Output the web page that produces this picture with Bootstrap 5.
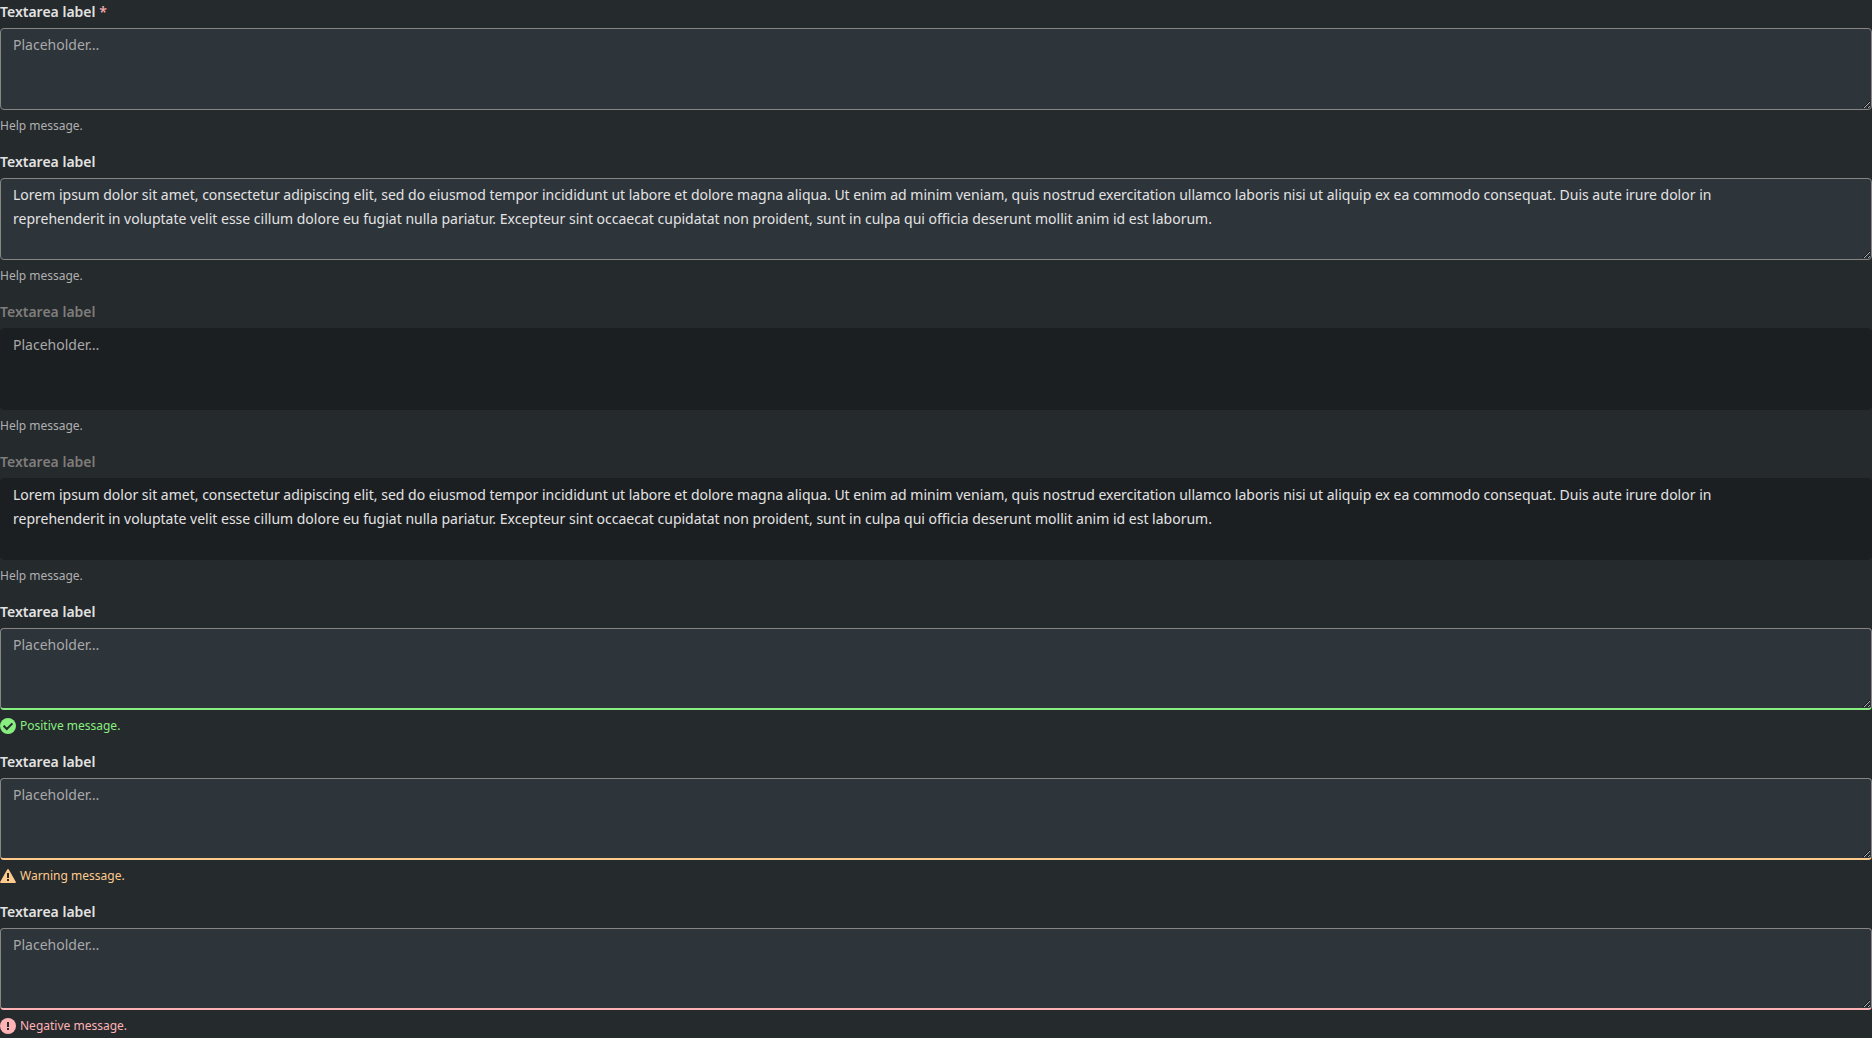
<!DOCTYPE html>
<html lang="en" data-bs-theme="dark">
<head>
<meta charset="utf-8">
<meta name="viewport" content="width=device-width, initial-scale=1">
<title>Textarea states</title>
<link href="https://cdn.jsdelivr.net/npm/bootstrap@5.3.0/dist/css/bootstrap.min.css" rel="stylesheet">
<style>
body { background: #252a2d; color: #e3e3e3; font-family: "Noto Sans", sans-serif; font-size: 14px; line-height: 24px; }
.field-list { row-gap: 12px; }
.field .form-label { font-size: 14px; line-height: 24px; font-weight: 600; color: #e3e3e3; }
.required-mark { color: #f7a8ab; }
.field .form-control { height: 82px; padding: 4px 12px; font-size: 14px; line-height: 24px; color: #e3e3e3; background-color: #2d343a; border: 1px solid #888684; border-radius: 4px; }
.field .form-control::placeholder { color: #a9a9a9; opacity: 1; }
.field .form-control:disabled { background-color: #1c1f22; border-color: #1c1f22; resize: none; }
.field-disabled .form-label { color: #7f7d7b; }
.field .form-text { font-size: 12px; line-height: 24px; color: #b0b0b0; }
.field-positive { --state: #88ee80; }
.field-warning { --state: #ffcb8c; }
.field-negative { --state: #ffb3b5; }
.field-state .form-control { border-bottom: 2px solid var(--state); }
.field-state .form-text { color: var(--state); }
</style>
<script src="https://cdn.jsdelivr.net/npm/bootstrap@5.3.0/dist/js/bootstrap.bundle.min.js"></script>
</head>
<body>
<form class="field-list d-grid">
  <div class="field">
    <label class="form-label d-block mb-1" for="required">Textarea label <span class="required-mark">*</span></label>
    <textarea class="form-control" id="required" placeholder="Placeholder…" aria-describedby="required-help" required></textarea>
    <div class="form-text mt-1" id="required-help">Help message.</div>
  </div>
  <div class="field">
    <label class="form-label d-block mb-1" for="filled">Textarea label</label>
    <textarea class="form-control" id="filled" aria-describedby="filled-help">Lorem ipsum dolor sit amet, consectetur adipiscing elit, sed do eiusmod tempor incididunt ut labore et dolore magna aliqua. Ut enim ad minim veniam, quis nostrud exercitation ullamco laboris nisi ut aliquip ex ea commodo consequat. Duis aute irure dolor in
reprehenderit in voluptate velit esse cillum dolore eu fugiat nulla pariatur. Excepteur sint occaecat cupidatat non proident, sunt in culpa qui officia deserunt mollit anim id est laborum.</textarea>
    <div class="form-text mt-1" id="filled-help">Help message.</div>
  </div>
  <div class="field field-disabled">
    <label class="form-label d-block mb-1" for="disabled">Textarea label</label>
    <textarea class="form-control" id="disabled" placeholder="Placeholder…" aria-describedby="disabled-help" disabled></textarea>
    <div class="form-text mt-1" id="disabled-help">Help message.</div>
  </div>
  <div class="field field-disabled">
    <label class="form-label d-block mb-1" for="disabled-filled">Textarea label</label>
    <textarea class="form-control" id="disabled-filled" aria-describedby="disabled-filled-help" disabled>Lorem ipsum dolor sit amet, consectetur adipiscing elit, sed do eiusmod tempor incididunt ut labore et dolore magna aliqua. Ut enim ad minim veniam, quis nostrud exercitation ullamco laboris nisi ut aliquip ex ea commodo consequat. Duis aute irure dolor in
reprehenderit in voluptate velit esse cillum dolore eu fugiat nulla pariatur. Excepteur sint occaecat cupidatat non proident, sunt in culpa qui officia deserunt mollit anim id est laborum.</textarea>
    <div class="form-text mt-1" id="disabled-filled-help">Help message.</div>
  </div>
  <div class="field field-state field-positive">
    <label class="form-label d-block mb-1" for="positive">Textarea label</label>
    <textarea class="form-control" id="positive" placeholder="Placeholder…" aria-describedby="positive-help"></textarea>
    <div class="form-text mt-1 d-flex align-items-center gap-1" id="positive-help">
      <svg width="16" height="16" viewBox="0 0 16 16" aria-hidden="true"><circle cx="8" cy="8" r="8" fill="currentColor"/><path d="M3.6 7.8 6.8 11l5.6-5.6" fill="none" stroke="#252a2d" stroke-width="2"/></svg>
      <span>Positive message.</span>
    </div>
  </div>
  <div class="field field-state field-warning">
    <label class="form-label d-block mb-1" for="warning">Textarea label</label>
    <textarea class="form-control" id="warning" placeholder="Placeholder…" aria-describedby="warning-help"></textarea>
    <div class="form-text mt-1 d-flex align-items-center gap-1" id="warning-help">
      <svg width="16" height="16" viewBox="0 0 16 16" aria-hidden="true"><path d="M7.2 1.4Q8 .4 8.8 1.4L15.9 14Q16 15 15.2 15H.8Q0 15 .1 14Z" fill="currentColor"/><path d="M7 5h2v5H7zM7 11h2v2H7z" fill="#252a2d"/></svg>
      <span>Warning message.</span>
    </div>
  </div>
  <div class="field field-state field-negative">
    <label class="form-label d-block mb-1" for="negative">Textarea label</label>
    <textarea class="form-control" id="negative" placeholder="Placeholder…" aria-describedby="negative-help"></textarea>
    <div class="form-text mt-1 d-flex align-items-center gap-1" id="negative-help">
      <svg width="16" height="16" viewBox="0 0 16 16" aria-hidden="true"><circle cx="8" cy="8" r="8" fill="currentColor"/><path d="M7 4h2v5H7zM7 10h2v2H7z" fill="#252a2d"/></svg>
      <span>Negative message.</span>
    </div>
  </div>
</form>
</body>
</html>
